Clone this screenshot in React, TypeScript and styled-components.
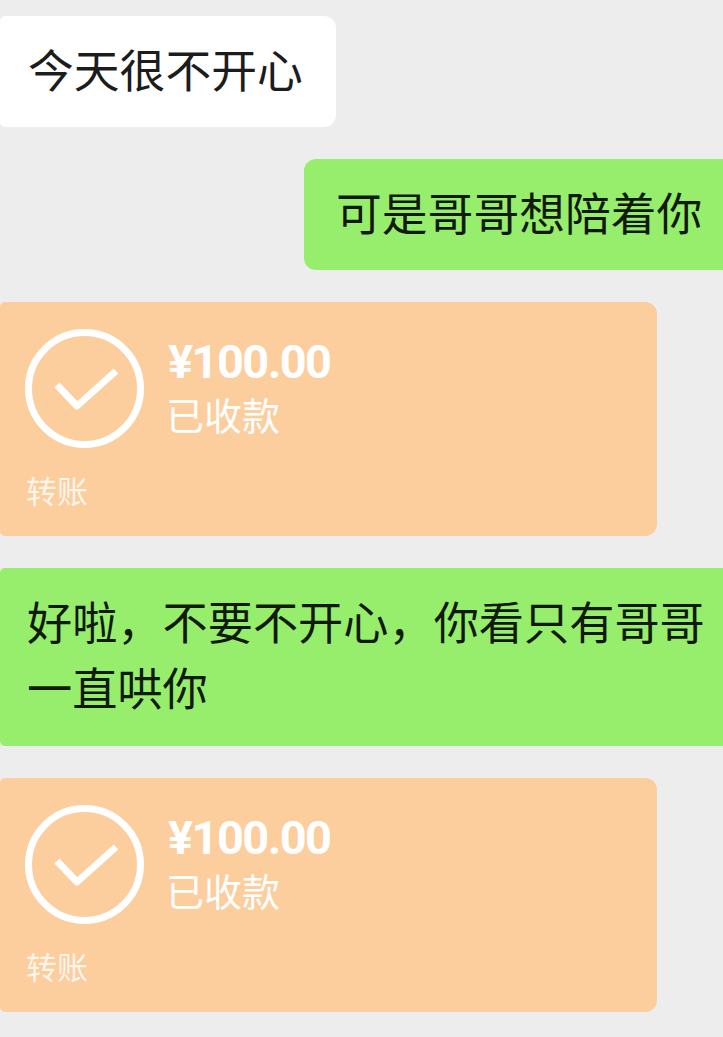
import React from "react";
import styled, { createGlobalStyle } from "styled-components";

const GlobalStyle = createGlobalStyle`
  html, body {
    margin: 0;
    padding: 0;
    background: #ededed;
  }
`;

const Chat = styled.div`
  width: 723px;
  height: 1037px;
  overflow: hidden;
  padding-top: 16px;
  box-sizing: border-box;
  display: flex;
  flex-direction: column;
  gap: 32px;
  font-family: "Noto Sans CJK SC", sans-serif;
`;

const Bubble = styled.div<{ $tone: "white" | "green" }>`
  box-sizing: border-box;
  height: 111px;
  display: flex;
  align-items: center;
  padding-bottom: 7px;
  background: ${(p) => (p.$tone === "white" ? "#ffffff" : "#97ee6c")};
  font-size: 45.8px;
  line-height: 66px;
  color: ${(p) => (p.$tone === "white" ? "#1c1c1c" : "#111a0c")};
`;

const LeftBubble = styled(Bubble)`
  align-self: flex-start;
  width: 336px;
  padding-left: 28px;
  border-radius: 5px 12px 12px 5px;
`;

const RightBubble = styled(Bubble)`
  align-self: flex-end;
  width: 419px;
  padding-left: 32px;
  border-radius: 12px 0 0 12px;
  white-space: nowrap;
`;

const WideBubble = styled(Bubble)`
  height: 178px;
  padding-left: 27px;
  padding-right: 14px;
  font-size: 45.2px;
  border-radius: 5px 0 0 5px;
`;

const TransferCard = styled.div`
  box-sizing: border-box;
  width: 657px;
  height: 234px;
  background: #fccd9d;
  border-radius: 5px 12px 12px 5px;
  padding: 27px 0 0 25px;
  color: #ffffff;
`;

const CardTop = styled.div`
  display: flex;
  align-items: center;
  gap: 24px;
`;

const CardText = styled.div`
  padding-bottom: 4px;
`;

const Amount = styled.div`
  font-family: Roboto, sans-serif;
  font-size: 47px;
  line-height: 54px;
  font-weight: 700;
  letter-spacing: -1.6px;
`;

const Status = styled.div`
  margin-left: -2px;
  font-size: 38px;
  line-height: 50px;
`;

const CardLabel = styled.div`
  margin-top: 21px;
  margin-left: 1px;
  font-size: 31px;
  line-height: 42px;
  opacity: 0.8;
`;

const Transfer = () => (
  <TransferCard>
    <CardTop>
      <svg width="119" height="119" viewBox="0 0 119 119" fill="none">
        <circle cx="59.5" cy="59.5" r="56" stroke="#fff" strokeWidth="7" />
        <path d="M32 56 L52 77 L91 42" stroke="#fff" strokeWidth="7" strokeLinejoin="round" />
      </svg>
      <CardText>
        <Amount>¥100.00</Amount>
        <Status>已收款</Status>
      </CardText>
    </CardTop>
    <CardLabel>转账</CardLabel>
  </TransferCard>
);

export default function App() {
  return (
    <>
      <GlobalStyle />
      <Chat>
        <LeftBubble $tone="white">今天很不开心</LeftBubble>
        <RightBubble $tone="green">可是哥哥想陪着你</RightBubble>
        <Transfer />
        <WideBubble $tone="green">好啦，不要不开心，你看只有哥哥一直哄你</WideBubble>
        <Transfer />
      </Chat>
    </>
  );
}
